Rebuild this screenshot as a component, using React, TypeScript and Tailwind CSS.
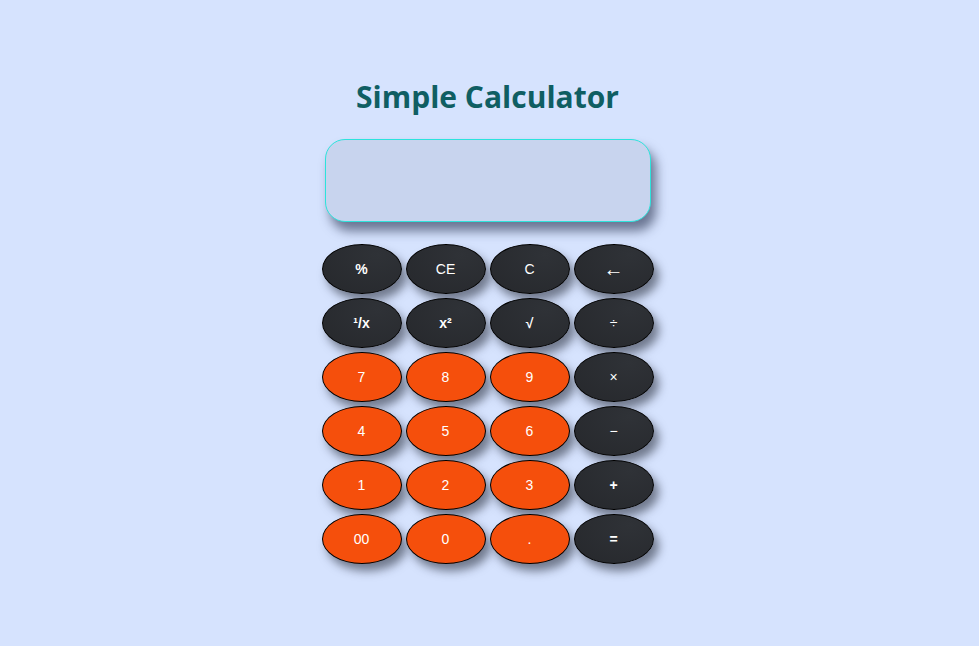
const keys = [
  { label: "%", kind: "dark", cls: "font-bold" },
  { label: "CE", kind: "dark" },
  { label: "C", kind: "dark" },
  { label: "←", kind: "dark", cls: "text-[20px]" },
  { label: "¹/x", kind: "dark", cls: "font-bold" },
  { label: "x²", kind: "dark", cls: "font-bold" },
  { label: "√", kind: "dark", cls: "font-bold" },
  { label: "÷", kind: "dark", cls: "text-[12px]" },
  { label: "7", kind: "num" },
  { label: "8", kind: "num" },
  { label: "9", kind: "num" },
  { label: "×", kind: "dark", cls: "text-[11px]" },
  { label: "4", kind: "num" },
  { label: "5", kind: "num" },
  { label: "6", kind: "num" },
  { label: "−", kind: "dark" },
  { label: "1", kind: "num" },
  { label: "2", kind: "num" },
  { label: "3", kind: "num" },
  { label: "+", kind: "dark", cls: "font-bold" },
  { label: "00", kind: "num" },
  { label: "0", kind: "num" },
  { label: ".", kind: "num" },
  { label: "=", kind: "dark", cls: "font-bold" },
];

export default function App() {
  return (
    <div className="min-h-screen w-full bg-[#d6e3fe] flex flex-col items-center pt-[80px] pr-[4px]">
      <h1 className="text-[30px] leading-[34px] font-bold text-[#0f5e63] font-['Open_Sans',sans-serif]">
        Simple Calculator
      </h1>

      {/* display */}
      <div className="mt-[25px] w-[326px] h-[83px] rounded-[20px] border border-[#2de3dc] bg-[#c8d4ee] shadow-[5px_9px_11px_rgba(35,45,75,0.6)]" />

      {/* keypad */}
      <div className="mt-[20px] grid grid-cols-4 gap-x-[4px] gap-y-[4px] p-[2px]">
        {keys.map((k, i) => (
          <button
            key={i}
            className={
              "w-[80px] h-[50px] rounded-[50%] border border-black text-white text-[14px] font-['Liberation_Sans',Arial,sans-serif] flex items-center justify-center shadow-[5px_7px_10px_rgba(30,35,50,0.55)] " +
              (k.kind === "num"
                ? "bg-[#f54f0c] "
                : "bg-[radial-gradient(ellipse_at_70%_20%,#2f3237,#26282c)] ") +
              (k.cls ?? "")
            }
          >
            {k.label}
          </button>
        ))}
      </div>
    </div>
  );
}
